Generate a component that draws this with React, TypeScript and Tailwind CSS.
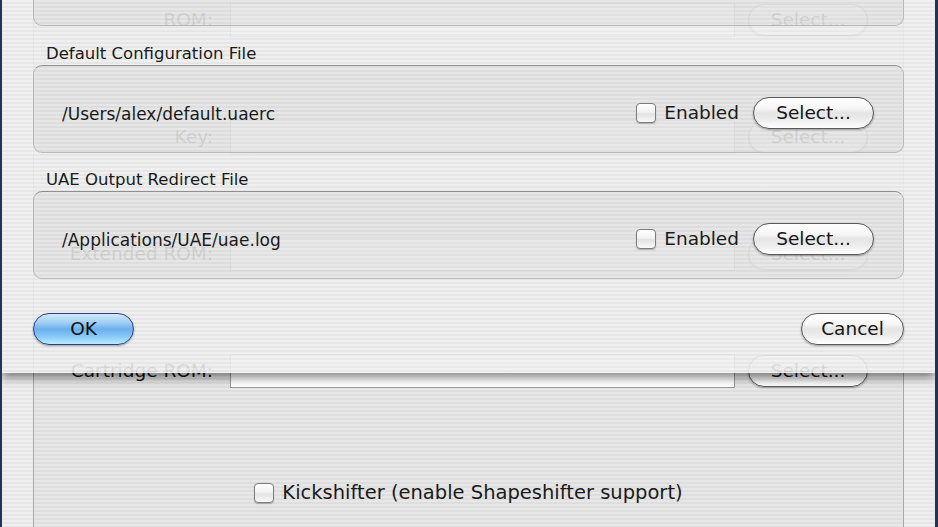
import React from "react";

const stripes =
  "bg-[repeating-linear-gradient(to_bottom,#efefef_0px,#efefef_2px,#e6e6e6_2px,#e6e6e6_4px)]";

function AquaButton({ label, className = "" }: { label: string; className?: string }) {
  return (
    <div
      className={
        "flex h-[32px] items-center justify-center rounded-full border border-[#5a5a5a] bg-[linear-gradient(to_bottom,#ffffff_0%,#f6f6f6_35%,#e4e4e4_50%,#eeeeee_75%,#ffffff_100%)] text-[18.5px] leading-none text-[#151515] shadow-[0_1px_2px_rgba(0,0,0,0.35)] " +
        className
      }
    >
      {label}
    </div>
  );
}

function Checkbox() {
  return (
    <div className="h-[20px] w-[20px] shrink-0 rounded-[4px] border border-[#7c7c7c] bg-[linear-gradient(to_bottom,#ffffff_0%,#f2f2f2_45%,#e2e2e2_55%,#fafafa_100%)] shadow-[0_1px_1px_rgba(0,0,0,0.25)]" />
  );
}

function FileBox({ path }: { path?: string }) {
  return (
    <div className="flex h-[88px] items-center rounded-[9px] border border-[#b9b9b9] border-t-[#8f8f8f] bg-[rgba(0,0,0,0.035)] pl-[28px] pr-[29px] pt-[8px]">
      <span className="pt-[3px] text-[17px] text-[#1a1a1a]">{path}</span>
      <div className="ml-auto flex items-center">
        <Checkbox />
        <span className="ml-[8px] text-[18.5px] text-[#1a1a1a]">Enabled</span>
        <AquaButton label="Select..." className="ml-[14px] w-[121px]" />
      </div>
    </div>
  );
}

function RomRow({ label }: { label: string }) {
  return (
    <div className="flex h-[34px] items-center">
      <div className="w-[179px] text-right text-[18.5px] text-[#111]">{label}</div>
      <div className="ml-[17px] h-[34px] w-[505px] border border-[#9a9a9a] bg-white" />
      <AquaButton label="Select..." className="ml-[13px] w-[120px]" />
    </div>
  );
}

export default function App() {
  return (
    <div className="relative h-[527px] w-[938px] overflow-hidden border-l-[2px] border-r-[3px] border-[#22335a] font-['DejaVu_Sans',sans-serif]">
      {/* underlying window */}
      <div className={"flex h-full w-full flex-col " + stripes}>
        <div className="mx-[31px] mt-[-40px] flex h-[640px] shrink-0 flex-col rounded-[9px] border border-[#a8a8a8] bg-[rgba(0,0,0,0.03)] pt-[42px]">
          <div className="flex flex-col gap-[83px]">
            <RomRow label="ROM:" />
            <RomRow label="Key:" />
            <RomRow label="Extended ROM:" />
            <RomRow label="Cartridge ROM:" />
          </div>
          <div className="mt-[95px] flex items-center justify-center">
            <Checkbox />
            <span className="ml-[8px] text-[19.5px] leading-[20px] text-[#1a1a1a]">
              Kickshifter (enable Shapeshifter support)
            </span>
          </div>
        </div>
      </div>

      {/* sheet */}
      <div className="absolute left-0 top-0 flex h-[373px] w-[933px] flex-col bg-[repeating-linear-gradient(to_bottom,rgba(240,240,240,0.9)_0px,rgba(240,240,240,0.9)_2px,rgba(231,231,231,0.9)_2px,rgba(231,231,231,0.9)_4px)] px-[31px] shadow-[0_5px_9px_rgba(0,0,0,0.45)]">
        <div className="mt-[-62px] flex h-[88px] items-center justify-end rounded-[9px] border border-[#b9b9b9] border-t-[#8f8f8f] bg-[rgba(0,0,0,0.035)] pr-[29px] pt-[8px]">
          <div className="mt-[-20px] h-[32px] w-[121px] rounded-full border border-[#5a5a5a] bg-[linear-gradient(to_bottom,#ffffff_0%,#f6f6f6_35%,#e4e4e4_50%,#eeeeee_75%,#ffffff_100%)] shadow-[0_1px_2px_rgba(0,0,0,0.35)]" />
        </div>
        <div className="flex h-[39px] items-end pb-[2px] pl-[13px] text-[16.5px] leading-[19px] text-[#1a1a1a]">
          Default Configuration File
        </div>
        <FileBox path="/Users/alex/default.uaerc" />
        <div className="flex h-[38px] items-end pb-[2px] pl-[13px] text-[16.5px] leading-[19px] text-[#1a1a1a]">
          UAE Output Redirect File
        </div>
        <FileBox path="/Applications/UAE/uae.log" />
        <div className="mt-[34px] flex items-center justify-between">
          <div className="flex h-[32px] w-[101px] items-center justify-center rounded-full border border-[#2f3f86] bg-[linear-gradient(to_bottom,#d2e8fb_0%,#9fcdf4_30%,#6cb0ee_50%,#7fc3f6_70%,#b8ecff_100%)] text-[18.5px] leading-none text-[#111] shadow-[0_1px_2px_rgba(0,0,0,0.35)]">
            OK
          </div>
          <AquaButton label="Cancel" className="w-[103px]" />
        </div>
      </div>
    </div>
  );
}
